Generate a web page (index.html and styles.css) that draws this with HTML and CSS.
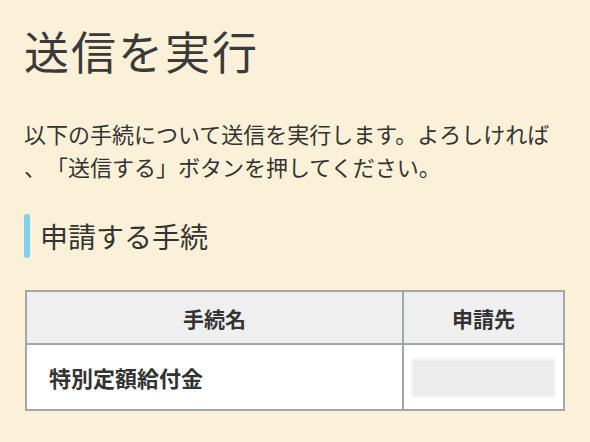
FILE: index.html
```html
<!DOCTYPE html>
<html lang="ja">
<head>
  <meta charset="UTF-8">
  <meta name="viewport" content="width=device-width, initial-scale=1.0">
  <title>送信を実行</title>
  <link rel="stylesheet" href="styles.css">
</head>
<body>
  <div class="page">
    <h1>送信を実行</h1>

    <p class="lead">以下の手続について送信を実行します。よろしければ<br>、「送信する」ボタンを押してください。</p>

    <h2 class="section-title">申請する手続</h2>

    <table class="proc-table">
      <thead>
        <tr>
          <th class="col-name">手続名</th>
          <th>申請先</th>
        </tr>
      </thead>
      <tbody>
        <tr>
          <td class="col-name">特別定額給付金</td>
          <td><div class="masked"></div></td>
        </tr>
      </tbody>
    </table>
  </div>
</body>
</html>
```

FILE: styles.css
```css
body { margin: 0; background: #faf1d8; color: #333; font-family: "Noto Sans CJK JP", "Noto Sans", sans-serif; text-spacing-trim: space-all; }
.page { padding: 0 25px 0 24px; }
h1 { margin: 24px 0 0; font-size: 45px; font-weight: normal; line-height: 53px; letter-spacing: 2px; color: #3a3a3a; }
.lead { margin: 40px 0 0; font-size: 22px; line-height: 33px; }
.section-title { display: flex; gap: 10px; margin: 31px 0 0; font-size: 28px; font-weight: normal; line-height: 44px; }
.section-title::before { content: ""; width: 6px; border-radius: 3px; background: #7fd2ee; }
.proc-table { width: 540px; margin: 32px 0 0 1px; border: 2px solid #a3a7ac; border-spacing: 0; table-layout: fixed; }
.proc-table th { height: 51px; padding: 0; background: #efefef; border-bottom: 2px solid #a3a7ac; font-size: 21px; font-weight: bold; }
.proc-table td { height: 64px; padding: 0; background: #fff; font-size: 22px; font-weight: bold; }
.proc-table .col-name { width: 375px; border-right: 2px solid #a3a7ac; }
.proc-table td.col-name { padding-left: 22px; }
.masked { width: 143px; height: 38px; margin: 2px 0 0 8px; background: #ececec; filter: blur(1.5px); }
```
